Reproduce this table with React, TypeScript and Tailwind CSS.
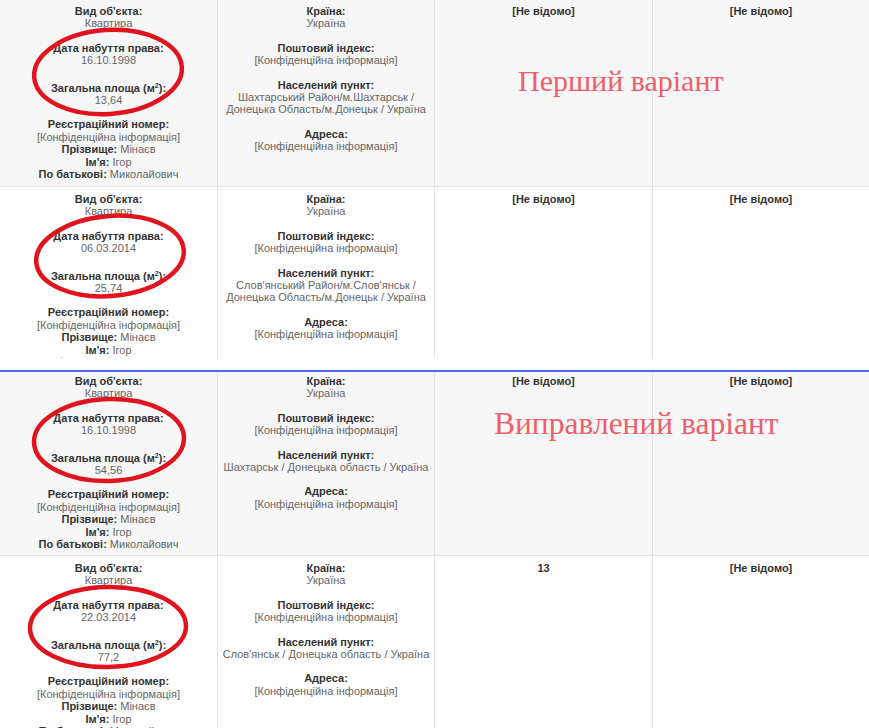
type Row = {
  date: string
  area: string
  place: string[]
  c3: string
  c4: string
  pad: string
  height: string
  bg: string
}

const topRows: Row[] = [
  {
    date: '16.10.1998',
    area: '13,64',
    place: ['Шахтарський Район/м.Шахтарськ /', 'Донецька Область/м.Донецьк / Україна'],
    c3: '[Не відомо]',
    c4: '[Не відомо]',
    pad: 'pt-[5px]',
    height: 'h-[187px]',
    bg: 'bg-[#f7f7f7]',
  },
  {
    date: '06.03.2014',
    area: '25,74',
    place: ["Слов'янський Район/м.Слов'янськ /", 'Донецька Область/м.Донецьк / Україна'],
    c3: '[Не відомо]',
    c4: '[Не відомо]',
    pad: 'pt-[6px]',
    height: 'h-[200px]',
    bg: 'bg-white',
  },
]

const bottomRows: Row[] = [
  {
    date: '16.10.1998',
    area: '54,56',
    place: ['Шахтарськ / Донецька область / Україна'],
    c3: '[Не відомо]',
    c4: '[Не відомо]',
    pad: 'pt-[3px]',
    height: 'h-[184px]',
    bg: 'bg-[#f7f7f7]',
  },
  {
    date: '22.03.2014',
    area: '77,2',
    place: ["Слов'янськ / Донецька область / Україна"],
    c3: '13',
    c4: '[Не відомо]',
    pad: 'pt-[6px]',
    height: 'h-[200px]',
    bg: 'bg-white',
  },
]

function Field({ label, children, className = '' }: { label: React.ReactNode; children: React.ReactNode; className?: string }) {
  return (
    <div className={className}>
      <div className="font-bold text-[#333]">{label}</div>
      <div className="text-[#666]">{children}</div>
    </div>
  )
}

function TableRow({ row }: { row: Row }) {
  return (
    <div className={`grid grid-cols-[218px_217px_218px_216px] border-b border-[#e3e3e3] ${row.height} ${row.bg}`}>
      <div className={`border-r border-[#e3e3e3] text-center ${row.pad}`}>
        <Field label="Вид об'єкта:">Квартира</Field>
        <Field label="Дата набуття права:" className="mt-3">{row.date}</Field>
        <Field
          label={<>Загальна площа (м<sup className="text-[7px]">2</sup>):</>}
          className="mt-[15px]"
        >
          {row.area}
        </Field>
        <Field label="Реєстраційний номер:" className="mt-3">[Конфіденційна інформація]</Field>
        <div>
          <span className="font-bold text-[#333]">Прізвище: </span>
          <span className="text-[#666]">Мінаєв</span>
        </div>
        <div>
          <span className="font-bold text-[#333]">Ім'я: </span>
          <span className="text-[#666]">Ігор</span>
        </div>
        <div>
          <span className="font-bold text-[#333]">По батькові: </span>
          <span className="text-[#666]">Миколайович</span>
        </div>
      </div>
      <div className={`border-r border-[#e3e3e3] text-center ${row.pad}`}>
        <Field label="Країна:">Україна</Field>
        <Field label="Поштовий індекс:" className="mt-3">[Конфіденційна інформація]</Field>
        <Field label="Населений пункт:" className="mt-3">
          {row.place.map((line) => (
            <div key={line} className="whitespace-nowrap">{line}</div>
          ))}
        </Field>
        <Field label="Адреса:" className="mt-3">[Конфіденційна інформація]</Field>
      </div>
      <div className={`border-r border-[#e3e3e3] text-center font-bold text-[#333] ${row.pad}`}>{row.c3}</div>
      <div className={`text-center font-bold text-[#333] ${row.pad}`}>{row.c4}</div>
    </div>
  )
}

function Ellipse({ cx, cy, rx, ry, rot }: { cx: number; cy: number; rx: number; ry: number; rot: number }) {
  return (
    <ellipse
      cx={cx}
      cy={cy}
      rx={rx}
      ry={ry}
      fill="none"
      stroke="#e0141e"
      strokeWidth={4.5}
      transform={`rotate(${rot} ${cx} ${cy})`}
    />
  )
}

export default function App() {
  return (
    <div className="w-[869px] h-[728px] overflow-hidden bg-white font-['Liberation_Sans',Arial,sans-serif] text-[11px] leading-[12.4px]">
      {/* Top: first variant */}
      <div className="relative h-[358px] overflow-hidden">
        {topRows.map((row, i) => (
          <TableRow key={i} row={row} />
        ))}
        <svg className="absolute left-0 top-0 pointer-events-none" width="869" height="358">
          <Ellipse cx={108} cy={72} rx={74} ry={42} rot={-4} />
          <Ellipse cx={110} cy={256} rx={74} ry={40} rot={-5} />
        </svg>
        <div className="absolute left-[518px] top-[66px] font-['Liberation_Serif','Times_New_Roman',serif] text-[30px] leading-none text-[#ef5f69] whitespace-nowrap">
          Перший варіант
        </div>
      </div>

      <div className="h-[12px]" />
      <div className="h-[2px] bg-[#4b6cf2]" />

      {/* Bottom: corrected variant */}
      <div className="relative h-[356px] overflow-hidden">
        {bottomRows.map((row, i) => (
          <TableRow key={i} row={row} />
        ))}
        <svg className="absolute left-0 top-0 pointer-events-none" width="869" height="356">
          <Ellipse cx={109} cy={68} rx={75} ry={41} rot={-2} />
          <Ellipse cx={108} cy={255} rx={78} ry={40} rot={-1} />
        </svg>
        <div className="absolute left-[494px] top-[36px] font-['Liberation_Serif','Times_New_Roman',serif] text-[31.5px] leading-none text-[#ef5f69] whitespace-nowrap">
          Виправлений варіант
        </div>
      </div>
    </div>
  )
}
